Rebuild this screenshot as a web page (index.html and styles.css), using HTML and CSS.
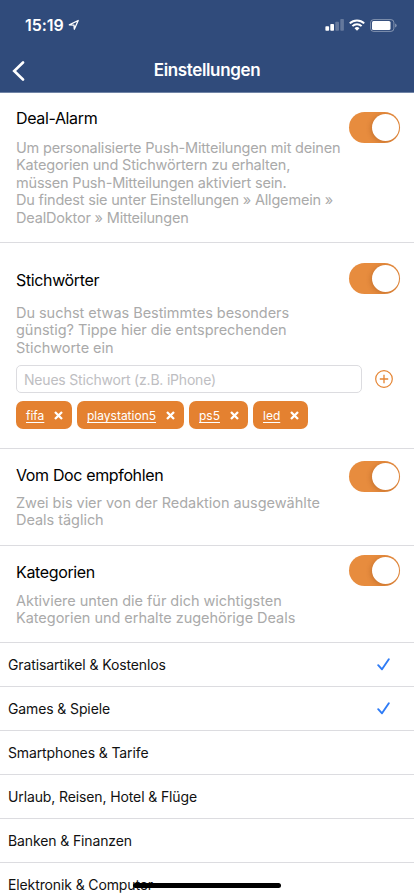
FILE: index.html
```html
<!DOCTYPE html>
<html lang="de">
<head>
<meta charset="utf-8">
<meta name="viewport" content="width=device-width, initial-scale=1">
<title>Einstellungen</title>
<link rel="stylesheet" href="styles.css">
</head>
<body>
<div class="screen">
  <header class="header">
    <div class="status">
      <div class="status-left">
        <span class="time">15:19</span>
        <svg class="location" width="12" height="12" viewBox="0 0 12 12"><path d="M1.3 5.8 10.2 1.5 6.3 10.2 6 6.1Z" fill="none" stroke="#fff" stroke-width="1.3" stroke-linejoin="round"/></svg>
      </div>
      <div class="status-right">
        <svg width="19" height="12" viewBox="0 0 19 12"><g fill="#fff"><rect x=".4" y="7.3" width="3.7" height="4.5" rx=".8"/><rect x="5.3" y="5" width="3.7" height="6.8" rx=".8"/><rect x="10.3" y="2.8" width="3.7" height="9" rx=".8" opacity=".25"/><rect x="15.3" y="0" width="3.6" height="11.8" rx=".8" opacity=".25"/></g></svg>
        <svg width="16" height="12" viewBox="0 0 16 12"><g fill="none" stroke="#fff" stroke-width="2"><path d="M.8 4.4a10.3 10.3 0 0 1 14.4 0"/><path d="M3.4 7.1a6.6 6.6 0 0 1 9.2 0"/></g><path d="M5.5 9.3a3.6 3.6 0 0 1 5 0L8 11.8Z" fill="#fff"/></svg>
        <svg width="27" height="13" viewBox="0 0 27 13"><rect x=".6" y=".6" width="23.3" height="11.8" rx="3" fill="none" stroke="#fff" stroke-opacity=".4" stroke-width="1"/><rect x="2" y="2" width="18.5" height="9" rx="1.5" fill="#fff"/><path d="M25.2 4.5q1.4.5 1.4 2t-1.4 2Z" fill="#fff" opacity=".45"/></svg>
      </div>
    </div>
    <nav class="nav">
      <svg class="back" width="13" height="20" viewBox="0 0 13 20"><path d="M11 1.5 2.2 10 11 18.5" fill="none" stroke="#fff" stroke-width="2.6" stroke-linecap="round"/></svg>
      <h1>Einstellungen</h1>
    </nav>
  </header>
  <main>
    <section class="setting alarm">
      <div class="copy">
        <h2>Deal-Alarm</h2>
        <p><span>Um personalisierte Push-Mitteilungen mit deinen</span><span>Kategorien und Stichwörtern zu erhalten,</span><span>müssen Push-Mitteilungen aktiviert sein.</span><span>Du findest sie unter Einstellungen » Allgemein »</span><span>DealDoktor » Mitteilungen</span></p>
      </div>
      <div class="toggle"><i></i></div>
    </section>
    <section class="setting keywords">
      <div class="copy">
        <h2>Stichwörter</h2>
        <p><span>Du suchst etwas Bestimmtes besonders</span><span>günstig? Tippe hier die entsprechenden</span><span>Stichworte ein</span></p>
      </div>
      <div class="toggle"><i></i></div>
      <div class="entry">
        <div class="field">Neues Stichwort (z.B. iPhone)</div>
        <svg width="18" height="18" viewBox="0 0 18 18"><g fill="none" stroke="#e58432"><circle cx="9" cy="9" r="8.3" stroke-width="1.2"/><path d="M9 4.8v8.4M4.8 9h8.4" stroke-width="1.3"/></g></svg>
      </div>
      <div class="chips">
        <div class="chip fifa"><u>fifa</u><svg width="9" height="9" viewBox="0 0 9 9"><path d="m1 1 7 7M8 1 1 8"/></svg></div>
        <div class="chip play"><u>playstation5</u><svg width="9" height="9" viewBox="0 0 9 9"><path d="m1 1 7 7M8 1 1 8"/></svg></div>
        <div class="chip ps"><u>ps5</u><svg width="9" height="9" viewBox="0 0 9 9"><path d="m1 1 7 7M8 1 1 8"/></svg></div>
        <div class="chip led"><u>led</u><svg width="9" height="9" viewBox="0 0 9 9"><path d="m1 1 7 7M8 1 1 8"/></svg></div>
      </div>
    </section>
    <section class="setting doc">
      <div class="copy">
        <h2>Vom Doc empfohlen</h2>
        <p><span>Zwei bis vier von der Redaktion ausgewählte</span><span>Deals täglich</span></p>
      </div>
      <div class="toggle"><i></i></div>
    </section>
    <section class="setting categories">
      <div class="copy">
        <h2>Kategorien</h2>
        <p><span>Aktiviere unten die für dich wichtigsten</span><span>Kategorien und erhalte zugehörige Deals</span></p>
      </div>
      <div class="toggle"><i></i></div>
    </section>
    <ul class="list">
      <li>Gratisartikel &amp; Kostenlos<svg width="13" height="13" viewBox="0 0 13 13"><path d="M1.2 7.2 5 11.3 11.8 1.2"/></svg></li>
      <li>Games &amp; Spiele<svg width="13" height="13" viewBox="0 0 13 13"><path d="M1.2 7.2 5 11.3 11.8 1.2"/></svg></li>
      <li>Smartphones &amp; Tarife</li>
      <li>Urlaub, Reisen, Hotel &amp; Flüge</li>
      <li>Banken &amp; Finanzen</li>
      <li>Elektronik &amp; Computer</li>
    </ul>
  </main>
  <div class="home"></div>
</div>
</body>
</html>
```

FILE: styles.css
```css
* { box-sizing: border-box; margin: 0; padding: 0; }
body { font-family: Inter, "Liberation Sans", sans-serif; background: #fff; color: #111; overflow: hidden; }
svg { display: block; flex: none; }
.screen { position: relative; width: 414px; height: 896px; overflow: hidden; }
.header { height: 93px; background: #304b7b; border-bottom: 1px solid #7084a6; color: #fff; }
.status { height: 48px; padding: 2px 17px 0 25px; display: flex; align-items: center; justify-content: space-between; }
.status-left { display: flex; align-items: center; gap: 4px; }
.time { font-size: 16px; font-weight: 600; letter-spacing: -.05px; }
.status-right { display: flex; align-items: center; gap: 5px; }
.nav { height: 44px; position: relative; display: flex; align-items: center; justify-content: center; }
.nav h1 { font-size: 17px; line-height: 20px; font-weight: 600; letter-spacing: -.37px; }
.back { position: absolute; left: 12px; top: 13px; }
.setting { display: grid; grid-template-columns: 333px 51px; align-items: start; padding: 0 14px 0 16px; border-bottom: 1px solid #dcdce0; }
.alarm { height: 150px; padding-top: 15px; }
.keywords { height: 206px; padding-top: 27px; grid-template-rows: 87px 28px 28px; row-gap: 8px; }
.doc { height: 97px; padding-top: 16px; }
.categories { height: 97px; padding-top: 16px; }
h2 { font-size: 16px; line-height: 20px; font-weight: 400; letter-spacing: -.36px; color: #000; white-space: nowrap; }
.setting p { margin-top: 11px; font-size: 14.5px; line-height: 17.4px; letter-spacing: -.04px; color: #aaa; white-space: nowrap; }
.alarm p { letter-spacing: -.19px; }
.keywords p { margin-top: 14px; }
.doc p { margin-top: 9px; }
.categories p { margin-top: 9.6px; }
.setting p span { display: block; width: max-content; }
.toggle { width: 51px; height: 31px; border-radius: 16px; background: #e78c3e; padding: 2px 1.5px; display: flex; justify-content: flex-end; margin-top: 4px; overflow: hidden; }
.toggle i { width: 27px; height: 27px; border-radius: 50%; background: #fff; box-shadow: -1px 1px 5px rgba(110, 45, 0, .28); }
.keywords .toggle { margin-top: -7px; }
.doc .toggle { margin-top: -4px; }
.categories .toggle { margin-top: -7px; }
.entry, .chips { grid-column: 1 / -1; display: flex; align-items: center; }
.entry { gap: 13px; }
.field { width: 346px; height: 28px; border: 1px solid #dcdce0; border-radius: 5px; padding-left: 7px; font-size: 14px; line-height: 27px; letter-spacing: -.2px; color: #bebec2; }
.chips { gap: 5px; }
.chip { height: 28px; border-radius: 7px; background: #e48130; color: #fff; display: flex; align-items: center; justify-content: space-between; padding: 0 9.5px 0 10px; font-size: 12px; }
.chip u { padding-top: 1px; text-underline-offset: 2px; text-decoration-skip-ink: none; }
.chip path { fill: none; stroke: #fff; stroke-width: 2.3; }
.fifa { width: 56px; }
.play { width: 107px; }
.ps { width: 59px; }
.led { width: 55px; }
.list { list-style: none; }
.list li { height: 44px; border-bottom: 1px solid #dcdce0; padding: 0 24px 0 8px; display: flex; align-items: center; justify-content: space-between; font-size: 14px; letter-spacing: -.12px; white-space: nowrap; }
.list path { fill: none; stroke: #2f7cf6; stroke-width: 1.9; stroke-linecap: round; stroke-linejoin: round; }
.home { position: absolute; left: 133px; top: 883px; width: 148px; height: 5px; border-radius: 3px; background: #000; }
```
